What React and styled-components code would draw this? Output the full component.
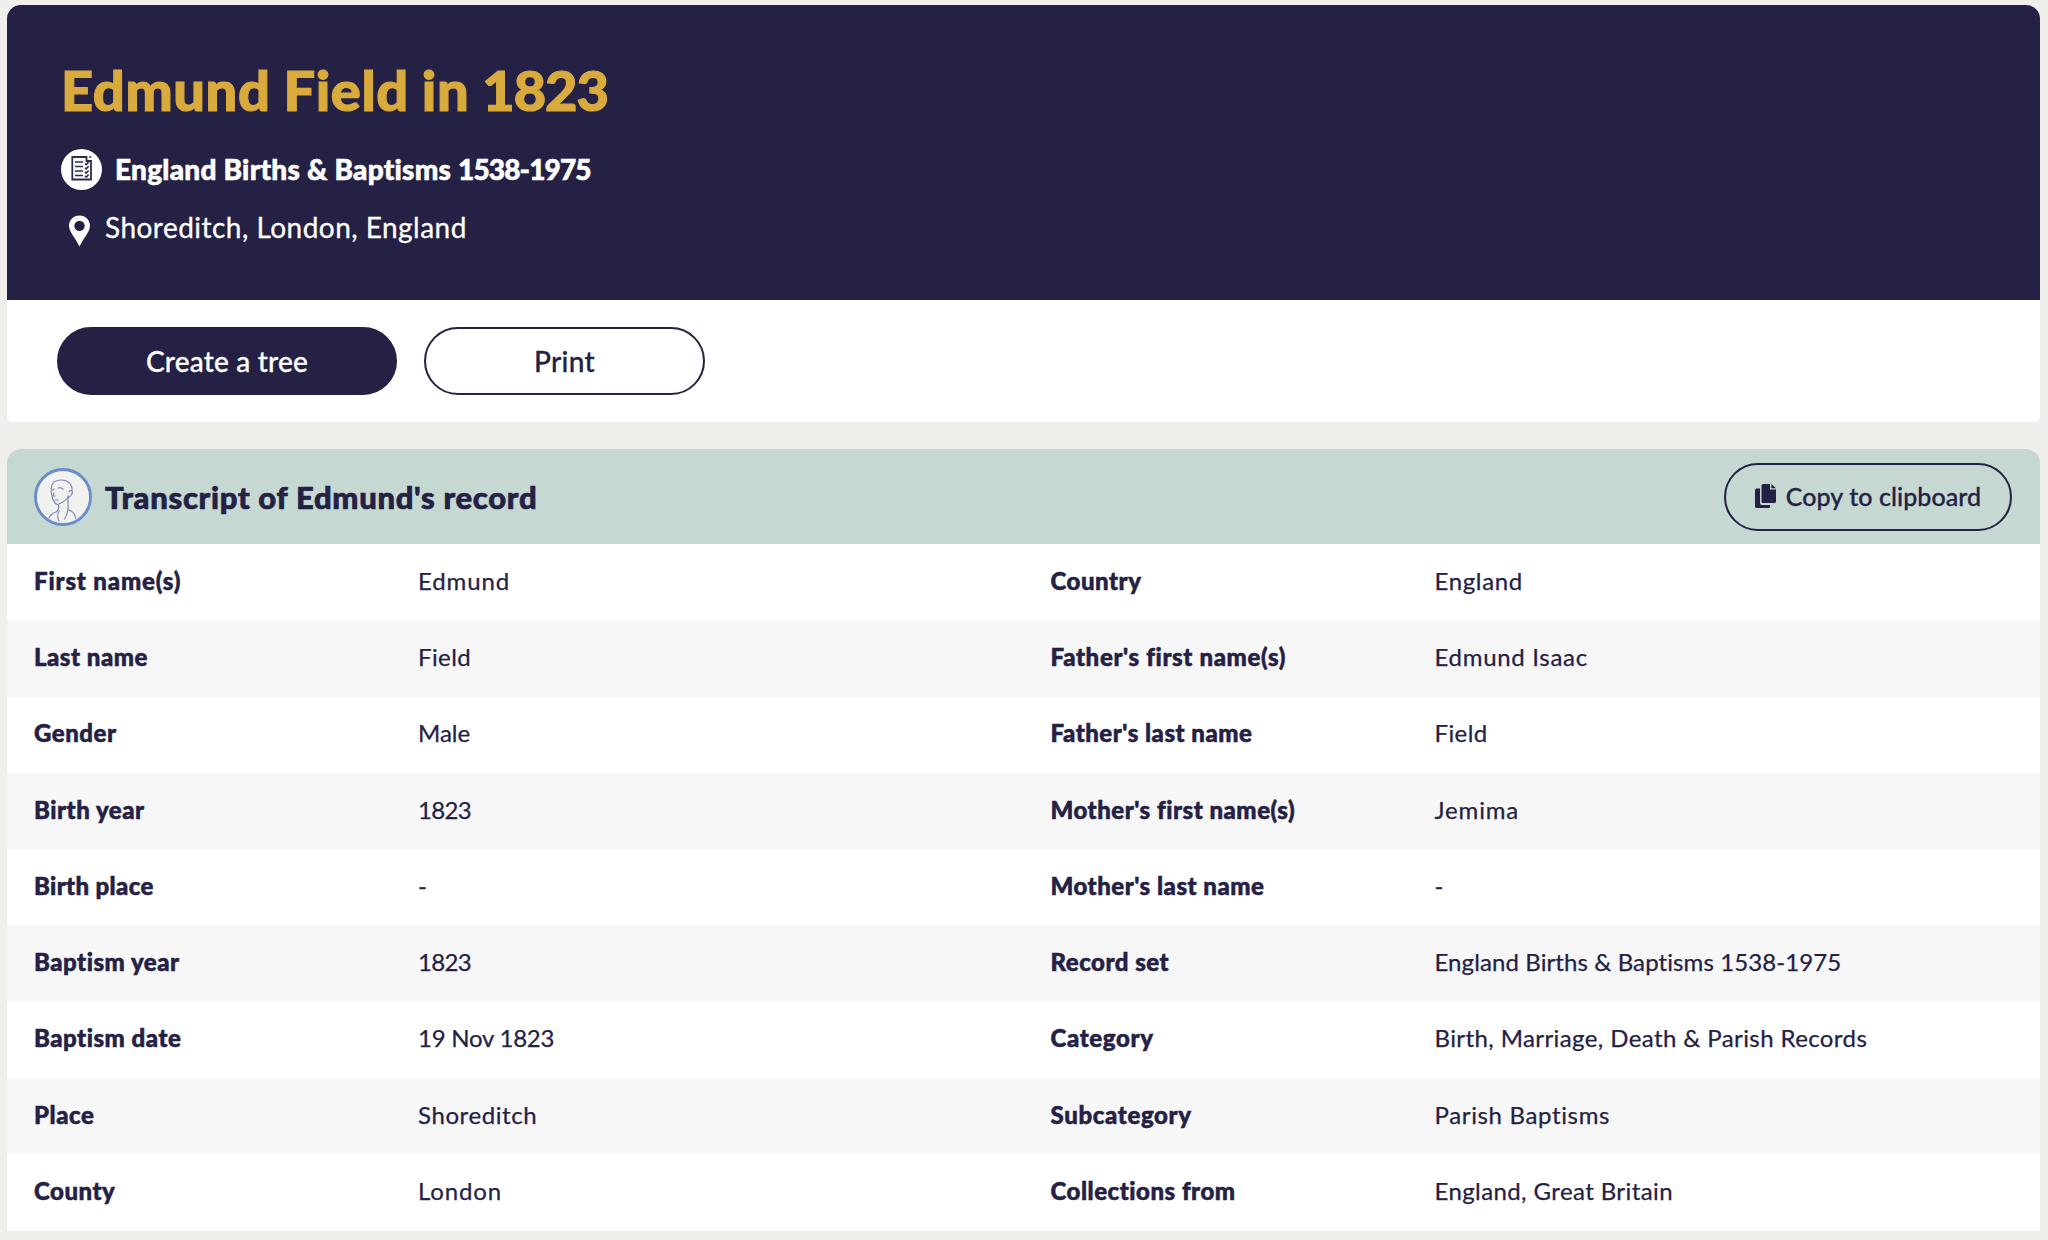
import React from 'react'
import styled, { createGlobalStyle } from 'styled-components'

const GlobalStyle = createGlobalStyle`
  * { box-sizing: border-box; }
  body {
    margin: 0;
    background-color: #f0efec;
    color: #242145;
    font-family: Lato, "Liberation Sans", sans-serif;
    font-variant-ligatures: none;
  }
`

const Page = styled.main`
  display: flex;
  flex-direction: column;
  gap: 27px;
  height: 1240px;
  padding: 5px 8px 0 7px;
  overflow: hidden;
`

const Panel = styled.section`
  overflow: hidden;
  border-radius: 14px 14px ${p => p.$bottom || '0 0'};
  background-color: white;
`

const Hero = styled.header`
  display: flex;
  flex-direction: column;
  align-items: flex-start;
  height: 295px;
  padding: 51px 54px 0;
  background-color: #242145;
  color: white;
`

const Title = styled.h1`
  margin: 0;
  color: #d9aa3c;
  font-size: 56px;
  font-weight: 900;
  line-height: 68px;
  letter-spacing: 0.6px;
  word-spacing: -1px;
  white-space: nowrap;
  -webkit-text-stroke: 1.2px;
`

const Years = styled.span`
  letter-spacing: ${p => p.$track}px;
`

const HeroLine = styled.div`
  display: flex;
  align-items: center;
  height: 40px;
  margin-top: ${p => p.$top}px;
  padding-left: ${p => p.$indent || 0}px;
  gap: ${p => p.$gap}px;
  font-size: 28px;
  font-weight: ${p => p.$weight || 400};
  line-height: 40px;
  letter-spacing: ${p => p.$track}px;
  white-space: nowrap;
  -webkit-text-stroke: ${p => (p.$weight ? 0.6 : 0.3)}px;

  svg { flex: none; }
`

const Actions = styled.div`
  display: flex;
  gap: 27px;
  height: 122px;
  padding: 27px 50px;
`

const Button = styled.button`
  display: flex;
  align-items: center;
  justify-content: center;
  gap: ${p => p.$gap || 0}px;
  width: ${p => p.$width}px;
  height: 68px;
  padding: 0 0 1px;
  border: 2px solid #242145;
  border-radius: 34px;
  background-color: ${p => (p.$filled ? '#242145' : 'transparent')};
  color: ${p => (p.$filled ? 'white' : '#242145')};
  font-family: inherit;
  font-size: ${p => p.$size || 28}px;
  font-weight: 500;
  letter-spacing: ${p => p.$track}px;
  white-space: nowrap;
  -webkit-text-stroke: 0.3px;
`

const SectionHeader = styled.header`
  display: flex;
  align-items: center;
  height: 95px;
  padding: 0 28px 0 27px;
  background-color: #c5d8d1;
`

const SectionTitle = styled.h2`
  flex: 1;
  margin: 0 0 0 13px;
  font-size: 31px;
  font-weight: 900;
  line-height: 40px;
  letter-spacing: 0.7px;
  white-space: nowrap;
  -webkit-text-stroke: 0.7px;
`

const Rows = styled.dl`
  margin: 0;
`

const Row = styled.div`
  display: grid;
  grid-template-columns: 1fr 1fr;
  height: 76.3px;

  &:nth-child(even) { background-color: #f7f7f8; }
`

const Field = styled.div`
  display: grid;
  grid-template-columns: 384px 1fr;
  align-items: center;
  padding: 0 0 3px 27px;
  font-size: 24px;
  line-height: 30px;
  white-space: nowrap;
`

const Label = styled.dt`
  font-weight: 900;
  letter-spacing: ${p => p.$track ?? 0.52}px;
  -webkit-text-stroke: 0.55px;
`

const Value = styled.dd`
  margin: 0;
  letter-spacing: ${p => p.$track ?? 0.4}px;
  -webkit-text-stroke: 0.25px;
`

const RecordIcon = () => (
  <svg width="41" height="41" viewBox="0 0 41 41">
    <circle cx="20.5" cy="20.5" r="20.5" fill="white" />
    <path d="M11.300 8h14.200v4h4.500v18.500H11.300z" fill="none" stroke="#2a2e4d" strokeWidth="1.800" />
    <path d="M14 13h8M14 17.500h8M14 22h8M14 26.500h8" stroke="#2a2e4d" strokeWidth="1.600" />
    <path d="M24 14.500l1.200 1.200 2.400-2.600M24 18.700l1.200 1.200 2.400-2.600M24 22.900l1.200 1.200 2.400-2.600M24 27l1.200 1.200 2.400-2.600" fill="none" stroke="#2a2e4d" strokeWidth="1.600" />
    <path d="M28.300 8h2" stroke="#2a2e4d" strokeWidth="1.600" />
  </svg>
)

const Pin = styled.svg`
  margin-top: 7px;
`

const PinIcon = () => (
  <Pin width="22" height="32" viewBox="0 0 22 32">
    <path fillRule="evenodd" fill="white" d="M11.500 0.500C5.500 0.500 1 4.900 1 10.800C1 17 7.500 23 11.500 31.500C15.500 23 22 17 22 10.800C22 4.900 17.500 0.500 11.500 0.500ZM11.500 5.700a5.200 5.200 0 1 1 0 10.400a5.200 5.200 0 0 1 0-10.400Z" />
  </Pin>
)

const PersonIcon = () => (
  <svg width="58" height="58" viewBox="0 0 58 58">
    <circle cx="29" cy="29" r="27.500" fill="#f1f1ef" stroke="#6d8cca" strokeWidth="3" />
    <g fill="none" stroke="#7f8cb5" strokeWidth="1.200" strokeLinecap="round">
      <path d="M17.500 21C17 14 22 12 27.500 12C34 12 38.500 16 38 22.500" />
      <path d="M17.300 20C17 25 17.500 29 19.500 32.500C21 36 22.500 37 25 36C29 34.500 33.500 31 34.500 28" />
      <path d="M35 23.500C38.500 21 39.500 24 37 27.500C36 29 34.500 29.500 34 29V41.500C38 43 41 46 42 50.500" />
      <path d="M24.500 37C25 41 24.500 43 22 44C18 45.500 16 47 15 50" />
      <path d="M25 43C23 47 23 49 25 53M34 42C33 47 32 49 30.500 51" />
      <path d="M24 20C26 19 28 20 29 21M19 22L20 21M20 25L19 28L21 28M21 32H24" />
    </g>
  </svg>
)

const Copy = styled.svg`
  margin-top: 1px;
`

const CopyIcon = () => (
  <Copy width="21" height="25" viewBox="0 0 21 25" fill="#242145">
    <path d="M8 0h7v5.500h6v12a1.500 1.500 0 0 1-1.500 1.500H8a1.500 1.500 0 0 1-1.500-1.500v-16A1.500 1.500 0 0 1 8 0z" />
    <path d="M16.300 0L21 4.300h-4.700z" />
    <path d="M1.500 4.500H5v14.500a2 2 0 0 0 2 2h8v1.500a1.500 1.500 0 0 1-1.500 1.500h-12A1.500 1.500 0 0 1 0 22.500V6a1.500 1.500 0 0 1 1.500-1.500z" />
  </Copy>
)

// letter spacing for the texts that differ from the default
const tracking = {
  'First name(s)': 0.85,
  "Father's first name(s)": 0.65,
  'Birth place': 0.36,
  Category: 0.65,
  Subcategory: 0.65,
  Edmund: 0.87,
  Male: 0,
  1823: -0.65,
  '19 Nov 1823': -0.24,
  Shoreditch: 0.59,
  London: 0.87,
  England: 0.65,
  'Edmund Isaac': 0.7,
  Jemima: 0.84,
  'England Births & Baptisms 1538-1975': 0.1,
  'Parish Baptisms': 0.65,
}

const rows = [
  ['First name(s)', 'Edmund', 'Country', 'England'],
  ['Last name', 'Field', "Father's first name(s)", 'Edmund Isaac'],
  ['Gender', 'Male', "Father's last name", 'Field'],
  ['Birth year', '1823', "Mother's first name(s)", 'Jemima'],
  ['Birth place', '-', "Mother's last name", '-'],
  ['Baptism year', '1823', 'Record set', 'England Births & Baptisms 1538-1975'],
  ['Baptism date', '19 Nov 1823', 'Category', 'Birth, Marriage, Death & Parish Records'],
  ['Place', 'Shoreditch', 'Subcategory', 'Parish Baptisms'],
  ['County', 'London', 'Collections from', 'England, Great Britain'],
]

const Entry = ({ label, value }) => (
  <Field>
    <Label $track={tracking[label]}>{label}</Label>
    <Value $track={tracking[value]}>{value}</Value>
  </Field>
)

const App = () => (
  <>
    <GlobalStyle />
    <Page>
      <Panel $bottom="5px 5px">
        <Hero>
          <Title>Edmund Field in <Years $track={-1}>1823</Years></Title>
          <HeroLine $top={25} $gap={13} $track={0.25} $weight={900}>
            <RecordIcon />
            <span>England Births &amp; Baptisms <Years $track={-0.87}>1538-1975</Years></span>
          </HeroLine>
          <HeroLine $top={18} $gap={15} $track={0.47} $indent={7}>
            <PinIcon />
            <span>Shoreditch, London, England</span>
          </HeroLine>
        </Hero>
        <Actions>
          <Button $filled $width={340} $track={0.2}>Create a tree</Button>
          <Button $width={281} $track={0.3}>Print</Button>
        </Actions>
      </Panel>
      <Panel>
        <SectionHeader>
          <PersonIcon />
          <SectionTitle>Transcript of Edmund's record</SectionTitle>
          <Button $width={288} $size={25} $gap={10} $track={0.08}>
            <CopyIcon />
            Copy to clipboard
          </Button>
        </SectionHeader>
        <Rows>
          {rows.map(([label, value, label2, value2]) => (
            <Row key={label}>
              <Entry label={label} value={value} />
              <Entry label={label2} value={value2} />
            </Row>
          ))}
        </Rows>
      </Panel>
    </Page>
  </>
)

export default App
